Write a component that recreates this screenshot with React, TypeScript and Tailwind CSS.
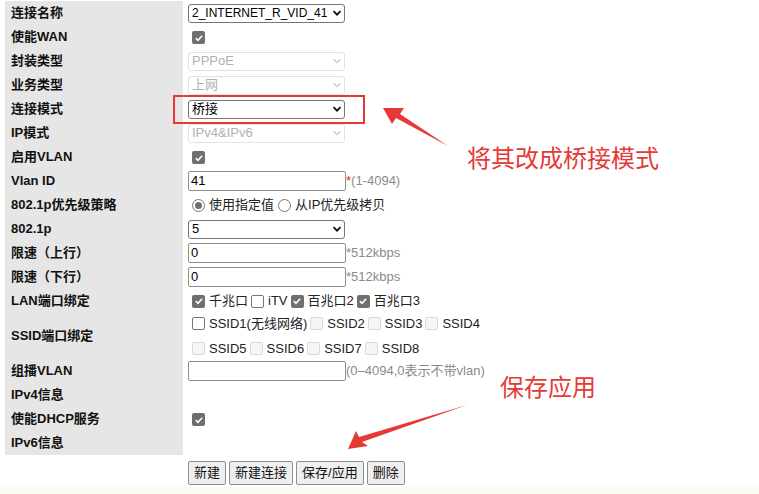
import React from 'react';

const font = { fontFamily: '"Liberation Sans", "Noto Sans CJK SC", sans-serif' };

const Check = ({ on = true, disabled = false }: { on?: boolean; disabled?: boolean }) => {
  if (!on) {
    return (
      <span
        className={`inline-block w-[13px] h-[13px] rounded-[2px] border align-middle ${
          disabled ? 'border-[#d9d9d9] bg-[#f5f5f5]' : 'border-[#767676] bg-white'
        }`}
      />
    );
  }
  return (
    <span className="inline-flex items-center justify-center w-[13px] h-[13px] rounded-[2px] bg-[#6f6f6f] align-middle">
      <svg viewBox="0 0 12 12" className="w-[10px] h-[10px]">
        <path d="M2.2 6.2 L4.8 8.8 L9.8 3.2" fill="none" stroke="#fff" strokeWidth="1.9" />
      </svg>
    </span>
  );
};

const Radio = ({ on }: { on: boolean }) => (
  <span className="inline-flex items-center justify-center w-[13px] h-[13px] rounded-full border border-[#767676] bg-white align-middle">
    {on && <span className="w-[7px] h-[7px] rounded-full bg-[#6f6f6f]" />}
  </span>
);

const Select = ({ value, disabled = false, small = false }: { value: string; disabled?: boolean; small?: boolean }) => (
  <div
    className={`flex items-center justify-between w-[157px] h-[19px] rounded-[3px] border pl-[3px] pr-[2px] ${
      small ? 'text-[12px]' : 'text-[13px]'
    } ${disabled ? 'border-[#e2e2e2] text-[#b0b0b0] bg-white' : 'border-[#767676] text-black bg-white'}`}
  >
    <span className="whitespace-nowrap overflow-hidden">{value}</span>
    <svg viewBox="0 0 10 10" className="w-[10px] h-[10px] shrink-0">
      <path
        d="M1.5 3.2 L5 6.7 L8.5 3.2"
        fill="none"
        stroke={disabled ? '#c4c4c4' : '#111'}
        strokeWidth={disabled ? 1.2 : 1.9}
      />
    </svg>
  </div>
);

const Input = ({ value }: { value: string }) => (
  <div className="flex items-center w-[158px] h-[20px] rounded-[2px] border border-[#8f8f8f] bg-white px-[2px] text-[13px] text-black">
    {value}
  </div>
);

const Hint = ({ children }: { children: React.ReactNode }) => (
  <span className="text-[13px] text-[#8a8a8a]">{children}</span>
);

const Row = ({ label, h = 'h-[24px]', children }: { label: string; h?: string; children?: React.ReactNode }) => (
  <div className={`flex ${h}`}>
    <div className="w-[178px] shrink-0 bg-[#e6e6e6] flex items-center pl-[6px] text-[13px] font-bold text-[#111]">{label}</div>
    <div className="flex items-center pl-[5px]">{children}</div>
  </div>
);

const Item = ({ children }: { children: React.ReactNode }) => (
  <span className="inline-flex items-center gap-[4px] mr-[3px] text-[13px] text-[#222]">{children}</span>
);

export default function App() {
  return (
    <div className="relative w-[759px] h-[494px] bg-white overflow-hidden" style={font}>
      <div className="ml-[5px] pt-[1px]">
        <Row label="连接名称">
          <Select value="2_INTERNET_R_VID_41" small />
        </Row>
        <Row label="使能WAN">
          <span className="ml-[4px]"><Check /></span>
        </Row>
        <Row label="封装类型">
          <Select value="PPPoE" disabled />
        </Row>
        <Row label="业务类型">
          <Select value="上网" disabled />
        </Row>
        <Row label="连接模式">
          <Select value="桥接" />
        </Row>
        <Row label="IP模式">
          <Select value="IPv4&IPv6" disabled />
        </Row>
        <Row label="启用VLAN">
          <span className="ml-[4px]"><Check /></span>
        </Row>
        <Row label="Vlan ID">
          <Input value="41" />
          <span className="text-[13px] text-[#e02020]">*</span>
          <Hint>(1-4094)</Hint>
        </Row>
        <Row label="802.1p优先级策略">
          <span className="ml-[4px] inline-flex items-center gap-[4px] text-[13px] text-[#222]">
            <Radio on /> 使用指定值 <Radio on={false} /> 从IP优先级拷贝
          </span>
        </Row>
        <Row label="802.1p">
          <Select value="5" />
        </Row>
        <Row label="限速（上行）">
          <Input value="0" />
          <Hint>*512kbps</Hint>
        </Row>
        <Row label="限速（下行）">
          <Input value="0" />
          <Hint>*512kbps</Hint>
        </Row>
        <Row label="LAN端口绑定">
          <span className="ml-[4px] inline-flex items-center">
            <Item><Check />千兆口</Item>
            <Item><Check on={false} />iTV</Item>
            <Item><Check />百兆口2</Item>
            <Item><Check />百兆口3</Item>
          </span>
        </Row>
        <Row label="SSID端口绑定" h="h-[46px]">
          <div className="ml-[4px] flex flex-col gap-[5px]">
            <span className="inline-flex items-center">
              <Item><Check on={false} />SSID1(无线网络)</Item>
              <Item><Check on={false} disabled />SSID2</Item>
              <Item><Check on={false} disabled />SSID3</Item>
              <Item><Check on={false} disabled />SSID4</Item>
            </span>
            <span className="inline-flex items-center">
              <Item><Check on={false} disabled />SSID5</Item>
              <Item><Check on={false} disabled />SSID6</Item>
              <Item><Check on={false} disabled />SSID7</Item>
              <Item><Check on={false} disabled />SSID8</Item>
            </span>
          </div>
        </Row>
        <Row label="组播VLAN">
          <Input value="" />
          <Hint>(0–4094,0表示不带vlan)</Hint>
        </Row>
        <Row label="IPv4信息" />
        <Row label="使能DHCP服务">
          <span className="ml-[4px]"><Check /></span>
        </Row>
        <Row label="IPv6信息" />
        <div className="flex gap-[3px] pl-[183px] pt-[6px]">
          {['新建', '新建连接', '保存/应用', '删除'].map((b) => (
            <div
              key={b}
              className="h-[24px] px-[5px] flex items-center rounded-[2px] border border-[#8f8f8f] bg-[#efefef] text-[13px] text-[#111]"
            >
              {b}
            </div>
          ))}
        </div>
      </div>
      <div className="absolute left-0 right-0 bottom-0 h-[7px] bg-[#fdfaf6]" />

      {/* annotations */}
      <div className="absolute left-[173px] top-[95px] w-[192px] h-[29px] border-2 border-[#e53935]" />
      <div className="absolute left-[467px] top-[147px] text-[24px] text-[#e53935] leading-none">将其改成桥接模式</div>
      <div className="absolute left-[500px] top-[376px] text-[24px] text-[#e53935] leading-none">保存应用</div>
      <svg className="absolute left-0 top-0" width="759" height="494" viewBox="0 0 759 494">
        <polygon points="383,108 404,108 400,114 448,146 396,118 392,124" fill="#e53935" />
        <polygon points="348,449 356,431 359,437 467,405 362,442 368,446" fill="#e53935" />
      </svg>
    </div>
  );
}
